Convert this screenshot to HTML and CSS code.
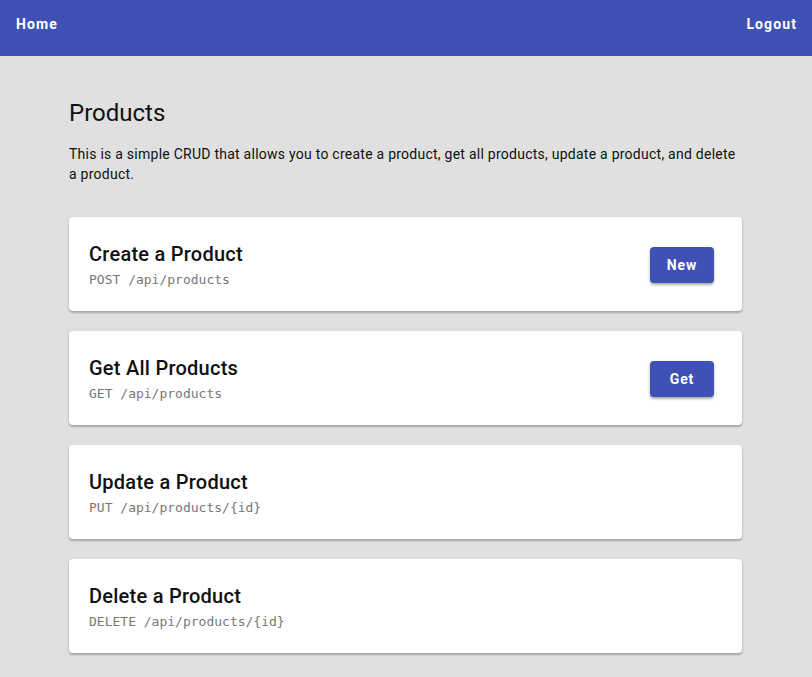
FILE: index.html
```html
<!DOCTYPE html>
<html>
<head>
<meta charset="utf-8">
<link rel="stylesheet" href="styles.css">
</head>
<body>
<nav class="navbar">
  <a class="nav-link">Home</a>
  <a class="nav-link">Logout</a>
</nav>
<main class="container">
  <h1 class="title">Products</h1>
  <p class="intro">This is a simple CRUD that allows you to create a product, get all products, update a product, and delete a product.</p>
  <div class="cards">
    <div class="card">
      <div class="card-text">
        <h2 class="card-title">Create a Product</h2>
        <code class="endpoint">POST /api/products</code>
      </div>
      <button class="btn">New</button>
    </div>
    <div class="card">
      <div class="card-text">
        <h2 class="card-title">Get All Products</h2>
        <code class="endpoint">GET /api/products</code>
      </div>
      <button class="btn">Get</button>
    </div>
    <div class="card">
      <div class="card-text">
        <h2 class="card-title">Update a Product</h2>
        <code class="endpoint">PUT /api/products/{id}</code>
      </div>
    </div>
    <div class="card">
      <div class="card-text">
        <h2 class="card-title">Delete a Product</h2>
        <code class="endpoint">DELETE /api/products/{id}</code>
      </div>
    </div>
  </div>
</main>
</body>
</html>
```
FILE: styles.css
```css
html, body {
  margin: 0;
  padding: 0;
  background: #e0e0e0;
  font-family: Roboto, "Liberation Sans", sans-serif;
  color: #111;
}
.navbar {
  height: 56px;
  box-sizing: border-box;
  background: #3f51b5;
  display: flex;
  align-items: flex-start;
  justify-content: space-between;
  padding: 14px 15px 0 16px;
}
.nav-link {
  color: #fff;
  font-size: 14px;
  line-height: 20px;
  font-weight: 700;
  letter-spacing: 1.1px;
}
.container {
  padding: 41px 70px 20px 69px;
}
.title {
  margin: 0;
  font-size: 24px;
  line-height: 32px;
  font-weight: 400;
}
.intro {
  margin: 15px 0 33px;
  font-size: 14px;
  line-height: 20px;
  letter-spacing: 0.25px;
}
.cards {
  display: flex;
  flex-direction: column;
  gap: 20px;
}
.card {
  background: #fff;
  border-radius: 4px;
  box-shadow: 0 2px 2px rgba(0,0,0,0.2), 0 1px 3px rgba(0,0,0,0.12);
  padding: 23px 28px 22px 20px;
  display: flex;
  align-items: center;
  justify-content: space-between;
}
.card-title {
  margin: 0;
  font-size: 20px;
  line-height: 28px;
  font-weight: 500;
  letter-spacing: 0.25px;
}
.endpoint {
  display: block;
  margin-top: 3px;
  font-family: "DejaVu Sans Mono", monospace;
  font-size: 13px;
  line-height: 18px;
  color: #777;
}
.btn {
  width: 64px;
  height: 36px;
  border: none;
  border-radius: 4px;
  background: #3f51b5;
  color: #fff;
  font-family: Roboto, sans-serif;
  font-size: 14px;
  font-weight: 700;
  letter-spacing: 0.9px;
  box-shadow: 0 2px 2px rgba(0,0,0,0.24), 0 1px 4px rgba(0,0,0,0.14);
}
```
